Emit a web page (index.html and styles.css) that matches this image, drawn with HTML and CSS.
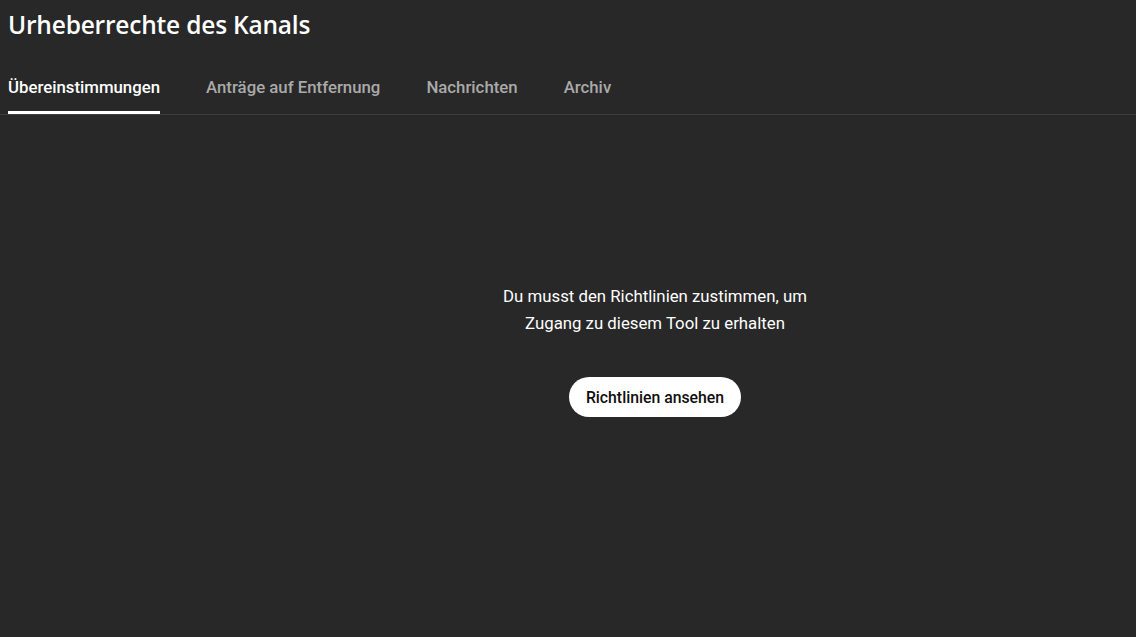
FILE: index.html
```html
<!DOCTYPE html>
<html lang="de">
<head>
    <meta charset="UTF-8">
    <title>Urheberrechte des Kanals</title>
    <link rel="stylesheet" href="styles.css">
</head>
<body>
    <div class="header">
        <h1 class="page-title">Urheberrechte des Kanals</h1>
        <div class="tabs">
            <a href="#" class="tab active">Übereinstimmungen</a>
            <a href="#" class="tab">Anträge auf Entfernung</a>
            <a href="#" class="tab">Nachrichten</a>
            <a href="#" class="tab">Archiv</a>
        </div>
    </div>
    <div class="content">
        <div class="notice">
            <p>Du musst den Richtlinien zustimmen, um<br>Zugang zu diesem Tool zu erhalten</p>
            <button class="policy-btn">Richtlinien ansehen</button>
        </div>
    </div>
</body>
</html>
```

FILE: styles.css
```css
body {
    margin: 0;
    padding: 0;
    background-color: #282828;
    color: #fff;
    font-family: Roboto, "Noto Sans", sans-serif;
}

.header {
    border-bottom: 1px solid #3d3d3d;
}

.page-title {
    margin: 0;
    padding: 8px 0 0 8px;
    font-family: "Open Sans", sans-serif;
    font-size: 24.5px;
    font-weight: 600;
    line-height: 34px;
    letter-spacing: -0.2px;
}

.tabs {
    display: flex;
    gap: 46px;
    padding: 0 8px;
    margin-top: 36px;
}

.tab {
    display: block;
    padding-bottom: 14px;
    color: #aaa;
    text-decoration: none;
    font-size: 16.8px;
    font-weight: 500;
    line-height: 19px;
    border-bottom: 3px solid transparent;
}

.tab.active {
    color: #fff;
    border-bottom-color: #fff;
}

.content {
    display: flex;
    justify-content: center;
    padding-left: 174px;
    padding-top: 168px;
}

.notice {
    text-align: center;
}

.notice p {
    margin: 0;
    font-size: 16.8px;
    line-height: 27px;
}

.policy-btn {
    margin-top: 40px;
    height: 40px;
    padding: 0 17px;
    border: none;
    border-radius: 20px;
    background-color: #fff;
    color: #0f0f0f;
    font-family: Roboto, sans-serif;
    font-size: 15.8px;
    font-weight: 500;
    cursor: pointer;
}
```
